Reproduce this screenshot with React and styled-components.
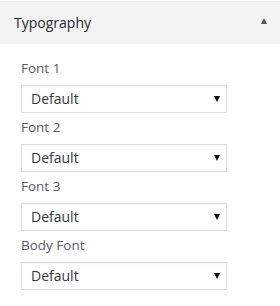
import React from "react";
import styled, { createGlobalStyle } from "styled-components";

const GlobalStyle = createGlobalStyle`
  html, body {
    margin: 0;
    padding: 0;
    background: #fff;
  }
  body {
    font-family: "Open Sans", "Noto Sans", sans-serif;
  }
`;

const Panel = styled.section`
  width: 280px;
  padding-top: 1px;
`;

const SectionHeader = styled.h3`
  box-sizing: border-box;
  display: flex;
  align-items: center;
  justify-content: space-between;
  height: 43px;
  margin: 0;
  padding: 0 13px 2px 14px;
  border-top: 1px solid #e8e8e8;
  background: #f3f3f3;
  color: #23282d;
  font-size: 14px;
  font-weight: 400;
`;

const Caret = styled.span`
  width: 0;
  height: 0;
  border-left: 3.5px solid transparent;
  border-right: 3.5px solid transparent;
  border-bottom: 6px solid #555;
  margin-top: -2px;
`;

const Body = styled.div`
  padding: 14px 21px 0 21px;
`;

const Control = styled.label`
  display: block;
  margin-bottom: 4px;
`;

const Label = styled.span`
  display: block;
  height: 20px;
  line-height: 20px;
  margin-bottom: 7px;
  color: #555d66;
  font-size: 13.5px;
`;

const SelectWrap = styled.div`
  position: relative;
  width: 206px;

  &::after {
    content: "";
    position: absolute;
    right: 7px;
    top: 11px;
    width: 0;
    height: 0;
    border-left: 3px solid transparent;
    border-right: 3px solid transparent;
    border-top: 6px solid #111;
    pointer-events: none;
  }
`;

const Select = styled.select`
  appearance: none;
  -webkit-appearance: none;
  box-sizing: border-box;
  display: block;
  width: 100%;
  height: 28px;
  margin: 0;
  padding: 0 24px 0 9px;
  border: 1px solid #dddddd;
  border-radius: 0;
  box-shadow: inset 0 1px 2px rgba(0, 0, 0, 0.04);
  background: #fff;
  color: #32373c;
  font-family: "Open Sans", "Noto Sans", sans-serif;
  font-size: 14px;
  line-height: 26px;
  outline: none;
`;

const fields = ["Font 1", "Font 2", "Font 3", "Body Font"];

export default function App() {
  return (
    <>
      <GlobalStyle />
      <Panel>
        <SectionHeader>
          Typography
          <Caret />
        </SectionHeader>
        <Body>
          {fields.map((name) => (
            <Control key={name}>
              <Label>{name}</Label>
              <SelectWrap>
                <Select defaultValue="default">
                  <option value="default">Default</option>
                </Select>
              </SelectWrap>
            </Control>
          ))}
        </Body>
      </Panel>
    </>
  );
}
